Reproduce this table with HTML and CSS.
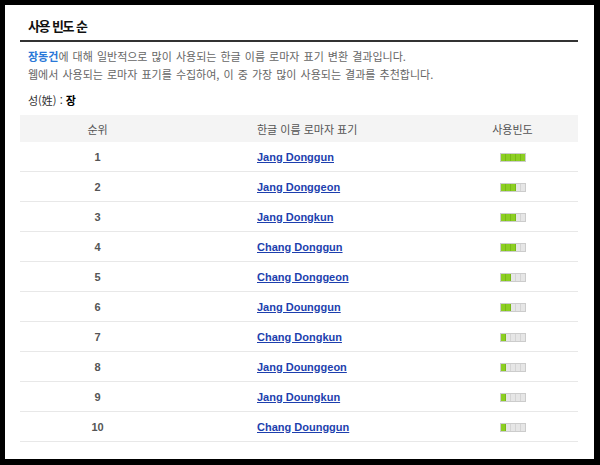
FILE: index.html
```html
<!DOCTYPE html>
<html lang="ko">
<head>
<meta charset="UTF-8">
<title>사용 빈도 순</title>
<link rel="stylesheet" href="styles.css">
</head>
<body>
<div class="frame">
<h2 class="title">사용 빈도 순</h2>
<p class="desc"><strong class="who">장동건</strong>에 대해 일반적으로 많이 사용되는 한글 이름 로마자 표기 변환 결과입니다.<br>
웹에서 사용되는 로마자 표기를 수집하여, 이 중 가장 많이 사용되는 결과를 추천합니다.</p>
<p class="surname">성(姓) : <b>장</b></p>

<table class="rank">
<tr><th class="no">순위</th><th class="name">한글 이름 로마자 표기</th><th class="freq">사용빈도</th></tr>
<tr><td class="no">1</td><td class="name"><a href="#">Jang Donggun</a></td><td class="freq"><span class="bar"><i class="on"></i><i class="on"></i><i class="on"></i><i class="on"></i><i class="on"></i></span></td></tr>
<tr><td class="no">2</td><td class="name"><a href="#">Jang Donggeon</a></td><td class="freq"><span class="bar"><i class="on"></i><i class="on"></i><i class="on"></i><i></i><i></i></span></td></tr>
<tr><td class="no">3</td><td class="name"><a href="#">Jang Dongkun</a></td><td class="freq"><span class="bar"><i class="on"></i><i class="on"></i><i class="on"></i><i></i><i></i></span></td></tr>
<tr><td class="no">4</td><td class="name"><a href="#">Chang Donggun</a></td><td class="freq"><span class="bar"><i class="on"></i><i class="on"></i><i class="on"></i><i></i><i></i></span></td></tr>
<tr><td class="no">5</td><td class="name"><a href="#">Chang Donggeon</a></td><td class="freq"><span class="bar"><i class="on"></i><i class="on"></i><i></i><i></i><i></i></span></td></tr>
<tr><td class="no">6</td><td class="name"><a href="#">Jang Dounggun</a></td><td class="freq"><span class="bar"><i class="on"></i><i class="on"></i><i></i><i></i><i></i></span></td></tr>
<tr><td class="no">7</td><td class="name"><a href="#">Chang Dongkun</a></td><td class="freq"><span class="bar"><i class="on"></i><i></i><i></i><i></i><i></i></span></td></tr>
<tr><td class="no">8</td><td class="name"><a href="#">Jang Dounggeon</a></td><td class="freq"><span class="bar"><i class="on"></i><i></i><i></i><i></i><i></i></span></td></tr>
<tr><td class="no">9</td><td class="name"><a href="#">Jang Doungkun</a></td><td class="freq"><span class="bar"><i class="on"></i><i></i><i></i><i></i><i></i></span></td></tr>
<tr><td class="no">10</td><td class="name"><a href="#">Chang Dounggun</a></td><td class="freq"><span class="bar"><i class="on"></i><i></i><i></i><i></i><i></i></span></td></tr>
</table>
</div>
</body>
</html>
```

FILE: styles.css
```css
body {margin:0; background:#fff; font-family:"Noto Sans CJK KR", "Liberation Sans", sans-serif;}
.frame {width:600px; height:465px; box-sizing:border-box; border:5px solid #000; border-right-width:6px; border-bottom-width:6px; padding:0 16px 0 15px;}
.title {margin:0; padding:11px 0 4px 8px; font-size:13px; line-height:20px; letter-spacing:-1.5px; word-spacing:1px; color:#111; border-bottom:2px solid #333;}
.desc {margin:5px 0 0 8px; font-size:11px; line-height:18px; word-spacing:1px; color:#666;}
.who {color:#2a78d8;}
.surname {margin:8px 0 0 8px; font-size:11px; line-height:18px; color:#333;}
.surname b {color:#000;}
.rank {margin-top:6px; width:558px; border-collapse:collapse; table-layout:fixed;}
.rank th {height:27px; padding:0; background:#f4f4f4; font-size:11px; line-height:14px; font-weight:normal; color:#555;}
.rank td {height:29px; padding:0; border-bottom:1px solid #e8e8e8; font:bold 11px/14px "Liberation Sans", sans-serif; vertical-align:middle;}
.no {width:155px; text-align:center;}
.rank .name {width:190px; text-align:left; padding-left:82px;}
.freq {text-align:center;}
td.no {color:#555;}
td.name a {color:#1d3fae; text-decoration:underline;}
.bar {display:inline-flex; vertical-align:middle; border:1px solid #ccc; background:#e6e6e6;}
.bar i {display:block; width:4px; height:7px; border-right:1px solid #d4d4d4;}
.bar i:last-child {border-right:0;}
.bar i.on {background:#8ccf22; border-right-color:#79b818;}
```
